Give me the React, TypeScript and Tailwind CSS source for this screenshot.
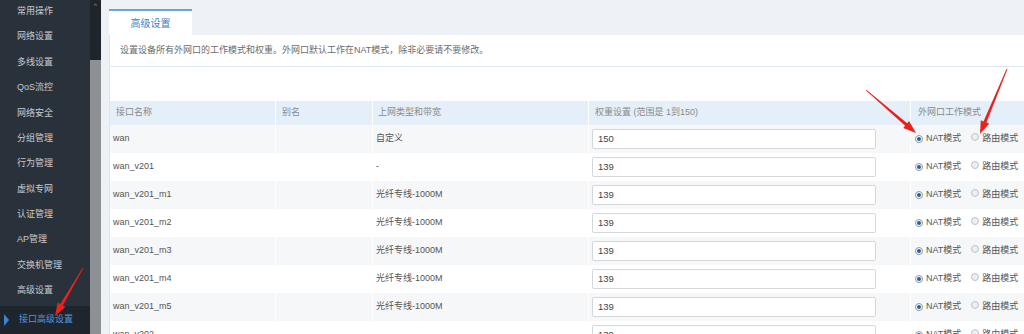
import React from "react";

const menu = [
  "常用操作",
  "网络设置",
  "多线设置",
  "QoS流控",
  "网络安全",
  "分组管理",
  "行为管理",
  "虚拟专网",
  "认证管理",
  "AP管理",
  "交换机管理",
  "高级设置",
];

const rows: [string, string, string][] = [
  ["wan", "自定义", "150"],
  ["wan_v201", "-", "139"],
  ["wan_v201_m1", "光纤专线-1000M", "139"],
  ["wan_v201_m2", "光纤专线-1000M", "139"],
  ["wan_v201_m3", "光纤专线-1000M", "139"],
  ["wan_v201_m4", "光纤专线-1000M", "139"],
  ["wan_v201_m5", "光纤专线-1000M", "139"],
  ["wan_v202", "", "139"],
];

function arrowPoints(tx: number, ty: number, hx: number, hy: number) {
  const dx = hx - tx;
  const dy = hy - ty;
  const len = Math.sqrt(dx * dx + dy * dy);
  const ux = dx / len;
  const uy = dy / len;
  const nx = -uy;
  const ny = ux;
  const headLen = 13;
  const bx = hx - ux * headLen;
  const by = hy - uy * headLen;
  const p = (x: number, y: number) => `${x.toFixed(1)},${y.toFixed(1)}`;
  return [
    p(tx + nx * 0.4, ty + ny * 0.4),
    p(bx + nx * 1.6, by + ny * 1.6),
    p(bx + nx * 4.5, by + ny * 4.5),
    p(hx, hy),
    p(bx - nx * 4.5, by - ny * 4.5),
    p(bx - nx * 1.6, by - ny * 1.6),
    p(tx - nx * 0.4, ty - ny * 0.4),
  ].join(" ");
}

function Radio({ checked }: { checked: boolean }) {
  return (
    <span
      className={`inline-flex items-center justify-center w-[8px] h-[8px] rounded-full border ${
        checked ? "border-[#8a9aa8] bg-white" : "border-[#bfc4c8] bg-[#eceef0]"
      }`}
    >
      {checked && <span className="w-[4px] h-[4px] rounded-full bg-[#2d5f8c]" />}
    </span>
  );
}

export default function App() {
  return (
    <div className="relative w-[1024px] h-[334px] overflow-hidden flex font-['Liberation_Sans','Noto_Sans_CJK_SC',sans-serif] text-[9px] bg-[#eef1f5]">
      {/* Sidebar */}
      <div className="w-[90px] h-full bg-[#29313a] flex flex-col">
        <div className="mt-[-1px]" />
        {menu.map((m) => (
          <div key={m} className="h-[25.4px] shrink-0 flex items-center pl-[17px] text-[#c6cbd1]">
            {m}
          </div>
        ))}
        <div className="mt-[2px] h-[29px] shrink-0 bg-[#1f252c] flex items-center relative">
          <span className="ml-[4px] w-0 h-0 border-y-[6px] border-y-transparent border-l-[5px] border-l-[#3b86d6]" />
          <span className="ml-[10px] text-[#4f96e0]">接口高级设置</span>
        </div>
      </div>
      {/* Scrollbar */}
      <div className="w-[11px] h-full flex flex-col">
        <div className="h-[60px] bg-[#1f252b] flex justify-center">
          <span className="mt-[2px] text-[7px] text-[#8d939a] leading-none">^</span>
        </div>
        <div className="flex-1 bg-[#8d9094]" />
      </div>
      {/* Content */}
      <div className="flex-1 flex flex-col pl-[8px] pt-[9px]">
        <div className="flex">
          <div className="w-[83px] h-[26px] bg-white border-t-2 border-[#6aa5d6] flex items-center justify-center text-[10px] text-[#3f7fbf]">
            高级设置
          </div>
        </div>
        <div className="flex-1 bg-white border-l border-[#dde6ee]">
          <div className="h-[32px] border-b border-[#dfe8f0] flex items-center pl-[10px] text-[#6b6b6b]">
            设置设备所有外网口的工作模式和权重。外网口默认工作在NAT模式，除非必要请不要修改。
          </div>
          <div className="h-[34px]" />
          {/* Table header */}
          <div className="flex h-[24px] text-[#8a8a8a]">
            <div className="w-[165px] bg-[#e4eff9] flex items-center pl-[6px]">接口名称</div>
            <div className="w-[96px] bg-[#e4eff9] ml-[1px] flex items-center pl-[6px]">别名</div>
            <div className="w-[215px] bg-[#e4eff9] ml-[1px] flex items-center pl-[5px]">上网类型和带宽</div>
            <div className="w-[321px] bg-[#e4eff9] ml-[1px] flex items-center pl-[6px]">权重设置 (范围是 1到150)</div>
            <div className="flex-1 bg-[#e4eff9] ml-[1px] flex items-center pl-[7px]">外网口工作模式</div>
          </div>
          {rows.map(([name, type, w], i) => {
            const bg = i % 2 === 0 ? "bg-[#f6f7f8]" : "bg-white";
            return (
              <div key={name} className="flex h-[28px] text-[#555]">
                <div className={`w-[165px] ${bg} flex items-center pl-[3px]`}>{name}</div>
                <div className={`w-[96px] ${bg} ml-[1px]`} />
                <div className={`w-[215px] ${bg} ml-[1px] flex items-center pl-[3px]`}>{type}</div>
                <div className={`w-[321px] ${bg} ml-[1px] flex items-center pl-[3px]`}>
                  <div className="w-[284px] h-[20px] border border-[#d4d7da] rounded-[2px] bg-white flex items-center pl-[5px] text-[9.5px] text-[#444]">
                    {w}
                  </div>
                </div>
                <div className={`flex-1 ${bg} ml-[1px] flex items-center pl-[4px] text-[#555]`}>
                  <Radio checked />
                  <span className="ml-[3px]">NAT模式</span>
                  <span className="ml-[10px]">
                    <Radio checked={false} />
                  </span>
                  <span className="ml-[3px]">路由模式</span>
                </div>
              </div>
            );
          })}
        </div>
      </div>
      {/* Red annotation arrows */}
      <svg className="absolute inset-0 pointer-events-none" width="1024" height="334" viewBox="0 0 1024 334">
        <polygon points={arrowPoints(83, 268, 55, 316)} fill="#e8231d" />
        <polygon points={arrowPoints(866, 90, 916, 133)} fill="#e8231d" />
        <polygon points={arrowPoints(1007, 69, 980, 134)} fill="#e8231d" />
      </svg>
    </div>
  );
}
